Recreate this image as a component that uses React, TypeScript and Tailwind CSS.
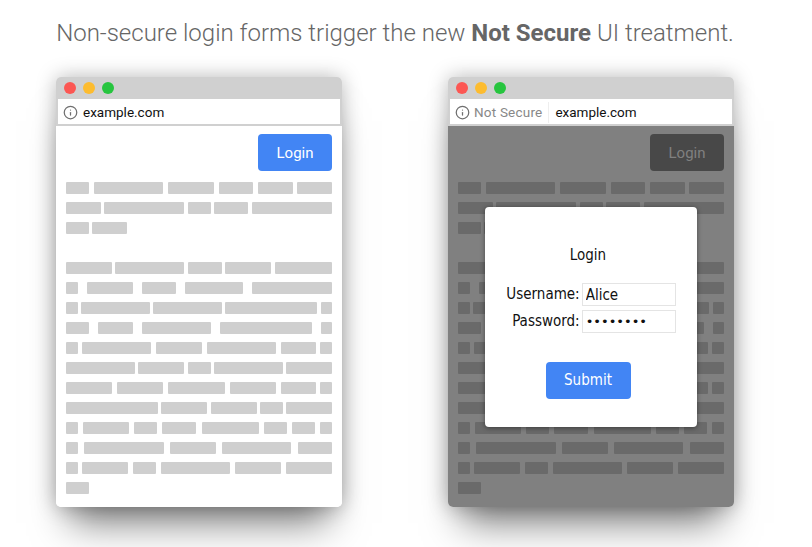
import React from "react";
import { Info } from "lucide-react";

const U = 11.5;

// bar widths in word units, one array per line of fake text
const intro = [
  [2, 6, 4, 3, 3, 3],
  [3, 7, 2, 3, 7],
];
const introLast = [2, 3];
const body = [
  [4, 6, 3, 4, 5],
  [1, 4, 3, 5, 7],
  [1, 6, 6, 8, 1],
  [2, 3, 6, 8, 1],
  [1, 6, 4, 6, 3, 1],
  [6, 4, 2, 6, 4],
  [4, 4, 5, 4, 3, 1],
  [8, 4, 4, 2, 4],
  [1, 4, 2, 3, 5, 2, 2, 1],
  [1, 7, 4, 6, 3],
  [1, 4, 2, 6, 4, 4],
];
const bodyLast = [2];

const Line = ({ words, dimmed, justify = true }: { words: number[]; dimmed: boolean; justify?: boolean }) => (
  <div className={`flex h-3 ${justify ? "justify-between" : "gap-[3px]"}`}>
    {words.map((w, i) => (
      <div
        key={i}
        className={`h-3 rounded-[1px] ${dimmed ? "bg-[#6a6a6a]" : "bg-[#cfcfcf]"}`}
        style={{ width: w * U }}
      />
    ))}
  </div>
);

const BrowserWindow = ({ secure, children }: { secure?: boolean; children?: React.ReactNode }) => {
  const dimmed = !secure;
  return (
    <div className="relative w-[286px] h-[430px] rounded-[5px] flex flex-col shadow-[0_0_20px_rgba(0,0,0,0.28),0_30px_36px_-14px_rgba(0,0,0,0.5)]">
      <div className="h-[22px] shrink-0 bg-[#d0d0d0] rounded-t-[5px] flex items-center gap-[7px] pl-2">
        <span className="w-3 h-3 rounded-full bg-[#fc5753]" />
        <span className="w-3 h-3 rounded-full bg-[#fdbc2f]" />
        <span className="w-3 h-3 rounded-full bg-[#27c53f]" />
      </div>
      <div className="h-[27px] shrink-0 bg-[#d0d0d0] px-[2px]">
        <div className="h-[25px] pt-[2px] bg-white flex items-center pl-[5px] text-[13.5px] font-['Roboto',sans-serif] text-[#111]">
          <Info size={15} strokeWidth={2} className="text-[#6f6f6f] mr-[5px]" />
          {dimmed && (
            <div className="flex items-center h-full -ml-px text-[#888] tracking-[0.2px]">
              <span>Not Secure</span>
              <span className="w-px h-[21px] bg-[#eeeeee] ml-[6px] mr-[6px]" />
            </div>
          )}
          <span>example.com</span>
        </div>
      </div>
      <div className={`flex-1 rounded-b-[5px] px-[10px] pt-2 ${dimmed ? "bg-[#808080]" : "bg-white"}`}>
        <div className="flex justify-end">
          <div
            className={`w-[74px] h-[37px] pt-[2px] rounded-[4px] flex items-center justify-center text-[15px] font-['Roboto',sans-serif] ${
              dimmed ? "bg-[#484848] text-[#808080]" : "bg-[#4285f4] text-white"
            }`}
          >
            Login
          </div>
        </div>
        <div className="mt-[11px] flex flex-col gap-2">
          {intro.map((words, i) => (
            <Line key={i} words={words} dimmed={dimmed} />
          ))}
          <Line words={introLast} dimmed={dimmed} justify={false} />
        </div>
        <div className="mt-7 flex flex-col gap-2">
          {body.map((words, i) => (
            <Line key={i} words={words} dimmed={dimmed} />
          ))}
          <Line words={bodyLast} dimmed={dimmed} />
        </div>
      </div>
      {children}
    </div>
  );
};

const LoginModal = () => (
  <div className="absolute left-[37px] top-[130px] w-[212px] h-[220px] bg-white rounded-[4px] shadow-[0_1px_5px_rgba(0,0,0,0.45)] flex flex-col items-center pt-[38px] pr-[6px] font-['DejaVu_Sans_Condensed','DejaVu_Sans',sans-serif] text-[15px] text-[#111]">
    <div className="h-5 leading-5">Login</div>
    <div className="mt-[18px] grid grid-cols-[auto_94px] gap-x-[2px] gap-y-[4px] items-center ml-[6px]">
      <label className="text-right">Username:</label>
      <input
        readOnly
        value="Alice"
        className="h-[23px] w-[94px] border border-[#e4e4e4] px-[3px] text-[15px] outline-none font-['DejaVu_Sans_Condensed','DejaVu_Sans',sans-serif]"
      />
      <label className="text-right">Password:</label>
      <input
        readOnly
        type="password"
        value="password"
        className="h-[23px] w-[94px] border border-[#e4e4e4] px-[3px] text-[13px] outline-none font-['DejaVu_Sans',sans-serif]"
      />
    </div>
    <div className="mt-[29px] w-[85px] h-[37px] rounded-[4px] bg-[#4285f4] text-white flex items-center justify-center text-[15px]">
      Submit
    </div>
  </div>
);

export default function App() {
  return (
    <div className="w-[812px] h-[547px] overflow-hidden bg-white">
      <h1 className="pt-[19px] h-[77px] w-[790px] text-center text-[24px] leading-[28px] font-light text-[#666] font-['Roboto',sans-serif]">
        Non-secure login forms trigger the new <b className="font-bold">Not Secure</b> UI treatment.
      </h1>
      <div className="flex gap-[106px] pl-[56px]">
        <BrowserWindow secure />
        <BrowserWindow>
          <LoginModal />
        </BrowserWindow>
      </div>
    </div>
  );
}
